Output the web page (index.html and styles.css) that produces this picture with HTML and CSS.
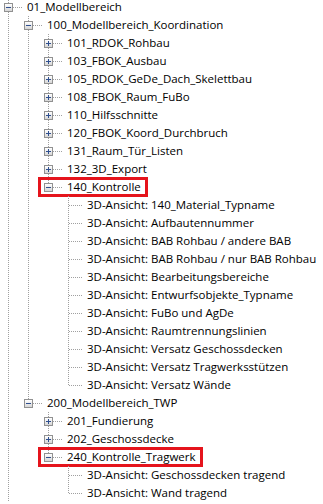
FILE: index.html
```html
<!DOCTYPE html>
<html lang="de">
<head>
    <meta charset="UTF-8">
    <meta name="viewport" content="width=device-width, initial-scale=1.0">
    <title>Projektbrowser</title>
    <link rel="stylesheet" href="styles.css">
</head>
<body>

<div class="tree">
    <!-- Ebene 0 -->
    <div class="row"><span class="c tee"><span class="box minus"></span></span><span class="label">01_Modellbereich</span></div>

    <!-- 100 Koordination -->
    <div class="row"><span class="g v"></span><span class="c tee"><span class="box minus"></span></span><span class="label">100_Modellbereich_Koordination</span></div>
    <div class="row"><span class="g v"></span><span class="g v"></span><span class="c tee"><span class="box plus"></span></span><span class="label">101_RDOK_Rohbau</span></div>
    <div class="row"><span class="g v"></span><span class="g v"></span><span class="c tee"><span class="box plus"></span></span><span class="label">103_FBOK_Ausbau</span></div>
    <div class="row"><span class="g v"></span><span class="g v"></span><span class="c tee"><span class="box plus"></span></span><span class="label">105_RDOK_GeDe_Dach_Skelettbau</span></div>
    <div class="row"><span class="g v"></span><span class="g v"></span><span class="c tee"><span class="box plus"></span></span><span class="label">108_FBOK_Raum_FuBo</span></div>
    <div class="row"><span class="g v"></span><span class="g v"></span><span class="c tee"><span class="box plus"></span></span><span class="label">110_Hilfsschnitte</span></div>
    <div class="row"><span class="g v"></span><span class="g v"></span><span class="c tee"><span class="box plus"></span></span><span class="label">120_FBOK_Koord_Durchbruch</span></div>
    <div class="row"><span class="g v"></span><span class="g v"></span><span class="c tee"><span class="box plus"></span></span><span class="label">131_Raum_Tür_Listen</span></div>
    <div class="row"><span class="g v"></span><span class="g v"></span><span class="c tee"><span class="box plus"></span></span><span class="label">132_3D_Export</span></div>
    <div class="row"><span class="g v"></span><span class="g v"></span><span class="mark"><span class="c end"><span class="box minus"></span></span><span class="label">140_Kontrolle</span></span></div>

    <!-- 140 Ansichten -->
    <div class="row"><span class="g v"></span><span class="g v"></span><span class="g"></span><span class="c tee"></span><span class="label">3D-Ansicht: 140_Material_Typname</span></div>
    <div class="row"><span class="g v"></span><span class="g v"></span><span class="g"></span><span class="c tee"></span><span class="label">3D-Ansicht: Aufbautennummer</span></div>
    <div class="row"><span class="g v"></span><span class="g v"></span><span class="g"></span><span class="c tee"></span><span class="label">3D-Ansicht: BAB Rohbau / andere BAB</span></div>
    <div class="row"><span class="g v"></span><span class="g v"></span><span class="g"></span><span class="c tee"></span><span class="label">3D-Ansicht: BAB Rohbau / nur BAB Rohbau</span></div>
    <div class="row"><span class="g v"></span><span class="g v"></span><span class="g"></span><span class="c tee"></span><span class="label">3D-Ansicht: Bearbeitungsbereiche</span></div>
    <div class="row"><span class="g v"></span><span class="g v"></span><span class="g"></span><span class="c tee"></span><span class="label">3D-Ansicht: Entwurfsobjekte_Typname</span></div>
    <div class="row"><span class="g v"></span><span class="g v"></span><span class="g"></span><span class="c tee"></span><span class="label">3D-Ansicht: FuBo und AgDe</span></div>
    <div class="row"><span class="g v"></span><span class="g v"></span><span class="g"></span><span class="c tee"></span><span class="label">3D-Ansicht: Raumtrennungslinien</span></div>
    <div class="row"><span class="g v"></span><span class="g v"></span><span class="g"></span><span class="c tee"></span><span class="label">3D-Ansicht: Versatz Geschossdecken</span></div>
    <div class="row"><span class="g v"></span><span class="g v"></span><span class="g"></span><span class="c tee"></span><span class="label">3D-Ansicht: Versatz Tragwerksstützen</span></div>
    <div class="row"><span class="g v"></span><span class="g v"></span><span class="g"></span><span class="c end"></span><span class="label">3D-Ansicht: Versatz Wände</span></div>

    <!-- 200 TWP -->
    <div class="row"><span class="g v"></span><span class="c end"><span class="box minus"></span></span><span class="label">200_Modellbereich_TWP</span></div>
    <div class="row"><span class="g v"></span><span class="g"></span><span class="c tee"><span class="box plus"></span></span><span class="label">201_Fundierung</span></div>
    <div class="row"><span class="g v"></span><span class="g"></span><span class="c tee"><span class="box plus"></span></span><span class="label">202_Geschossdecke</span></div>
    <div class="row"><span class="g v"></span><span class="g"></span><span class="mark"><span class="c end"><span class="box minus"></span></span><span class="label">240_Kontrolle_Tragwerk</span></span></div>
    <div class="row"><span class="g v"></span><span class="g"></span><span class="g"></span><span class="c tee"></span><span class="label">3D-Ansicht: Geschossdecken tragend</span></div>
    <div class="row"><span class="g v"></span><span class="g"></span><span class="g"></span><span class="c end"></span><span class="label">3D-Ansicht: Wand tragend</span></div>
</div>

</body>
</html>
```

FILE: styles.css
```css
body {
    margin: 0;
    background-color: #fff;
    font-family: "Open Sans", "Noto Sans", sans-serif;
    font-size: 11.5px;
    color: #000;
    overflow: hidden;
}

.tree {
    margin-top: -2px;
}

.row {
    display: flex;
    height: 18px;
}

/* Führungslinien der übergeordneten Ebenen */
.g {
    flex: none;
    width: 20px;
}

.g.v {
    background-image: repeating-linear-gradient(to bottom, #a0a0a0 0 1px, transparent 1px 2px);
    background-size: 1px 100%;
    background-position: 8px 0;
    background-repeat: no-repeat;
}

/* Verbinder mit Knoten-Box */
.c {
    flex: none;
    width: 24px;
    display: flex;
    align-items: center;
    padding-left: 4px;
    box-sizing: border-box;
    background-repeat: no-repeat;
}

.c.tee {
    background-image:
        repeating-linear-gradient(to bottom, #a0a0a0 0 1px, transparent 1px 2px),
        repeating-linear-gradient(to right, #a0a0a0 0 1px, transparent 1px 2px);
    background-size: 1px 100%, 14px 1px;
    background-position: 8px 0, 9px 9px;
}

.c.end {
    background-image:
        repeating-linear-gradient(to bottom, #a0a0a0 0 1px, transparent 1px 2px),
        repeating-linear-gradient(to right, #a0a0a0 0 1px, transparent 1px 2px);
    background-size: 1px 10px, 14px 1px;
    background-position: 8px 0, 9px 9px;
}

.box {
    width: 9px;
    height: 9px;
    box-sizing: border-box;
    border: 1px solid #919191;
    background-repeat: no-repeat;
}

.box.minus {
    background-image:
        linear-gradient(#2f4f8f, #2f4f8f),
        linear-gradient(#ffffff, #d6d6d6);
    background-size: 5px 1px, 100% 100%;
    background-position: center, 0 0;
}

.box.plus {
    background-image:
        linear-gradient(#2f4f8f, #2f4f8f),
        linear-gradient(#2f4f8f, #2f4f8f),
        linear-gradient(#ffffff, #d6d6d6);
    background-size: 5px 1px, 1px 5px, 100% 100%;
    background-position: center, center, 0 0;
}

.label {
    padding-left: 3px;
    line-height: 18px;
    white-space: nowrap;
}

/* rote Markierung */
.mark {
    display: flex;
    margin-left: -1px;
    padding-left: 1px;
    padding-right: 6px;
    outline: 3px solid #e5141c;
    outline-offset: -2px;
}
```
